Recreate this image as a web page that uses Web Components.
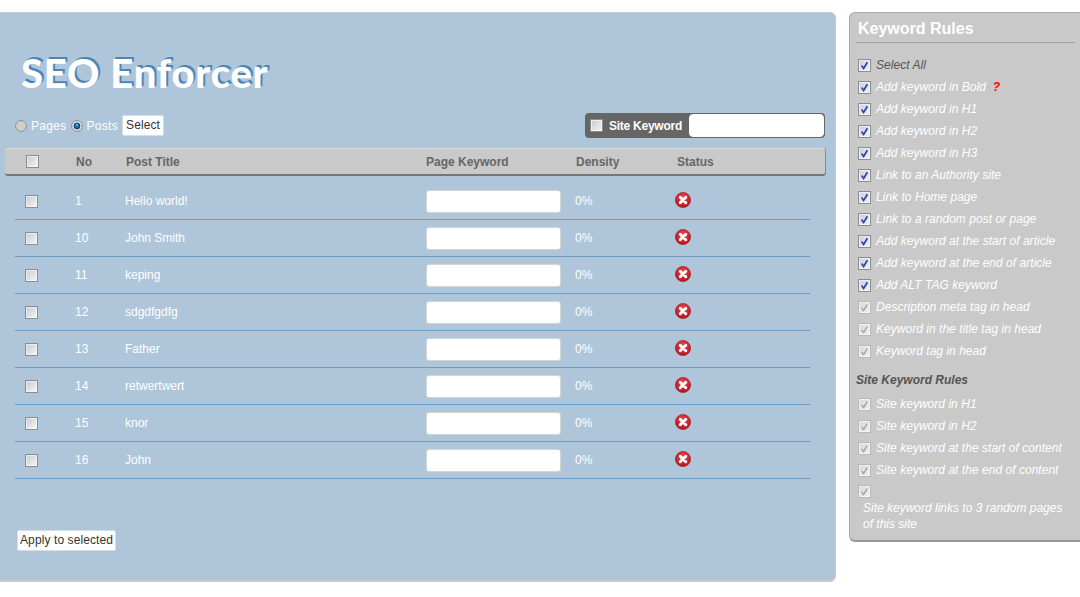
<!DOCTYPE html>
<html><head><meta charset="utf-8"><style>
html,body{margin:0;padding:0;background:#fff;overflow:hidden}
body{font:12px "Liberation Sans",Arial,sans-serif}
</style></head><body>
<seo-app></seo-app>
<script>
const def=(n,css,html)=>{customElements.define(n,class extends HTMLElement{connectedCallback(){if(this.shadowRoot)return;const r=this.attachShadow({mode:'open'});r.innerHTML=`<style>${css}</style>`+(typeof html==='function'?html(this):html);}})};
def('seo-check',`:host{display:inline-block;width:13px;height:13px;flex:none;line-height:0}svg{display:block}`,h=>{
 const v=h.getAttribute('state')||'';
 const id='g'+Math.random().toString(36).slice(2);
 let stroke='#8c8c8c',mark='',a='#c4c8cf',b='#f8f8f8';
 if(v==='on'){a='#c9cfe4';b='#f0f2f8';mark='<path d="M3.6 6.6 5.6 9.4 9.4 3.2" fill="none" stroke="#31439a" stroke-width="1.7"/>'}
 if(v==='dim'){stroke='#b8b8b8';a='#d8d8d8';b='#efefef';mark='<path d="M3.6 6.8 5.6 9.6 9.2 3.6" fill="none" stroke="#a0a0a0" stroke-width="1.3"/>'}
 return `<svg width="13" height="13" viewBox="0 0 13 13"><defs><linearGradient id="${id}" x1="0" y1="0" x2="1" y2="1"><stop offset="0" stop-color="${a}"/><stop offset="1" stop-color="${b}"/></linearGradient></defs><rect x=".5" y=".5" width="12" height="12" fill="url(#${id})" stroke="${stroke}"/><rect x="1.5" y="1.5" width="10" height="10" fill="none" stroke="#fff" stroke-opacity=".55"/>${mark}</svg>`;
});
def('seo-radio',`:host{display:inline-block;width:12px;height:12px;flex:none;line-height:0}svg{display:block}`,h=>{
 const on=h.hasAttribute('on');
 return `<svg width="12" height="12" viewBox="0 0 12 12"><circle cx="6" cy="6" r="5.4" fill="${on?'#dcdfe3':'#d6d6d6'}" stroke="#8f8f8f"/>${on?'<circle cx="6" cy="6" r="3" fill="#0b6fa8" stroke="#12304a" stroke-width=".8"/><circle cx="6" cy="5" r="1" fill="#7cc4ea"/>':'<circle cx="6" cy="6" r="4" fill="#cfcfcf"/>'}</svg>`;
});
def('seo-status',`:host{display:block;width:16px;height:16px;line-height:0}svg{display:block}`,
`<svg width="16" height="16" viewBox="0 0 16 16"><defs><radialGradient id="r" cx=".5" cy=".35" r=".7"><stop offset="0" stop-color="#ea4a55"/><stop offset="1" stop-color="#b20d14"/></radialGradient></defs><circle cx="8" cy="8" r="7.6" fill="url(#r)" stroke="#a51015" stroke-width=".6"/><path d="M5.2 5.2 10.8 10.8M10.8 5.2 5.2 10.8" stroke="#fff" stroke-width="2.9" stroke-linecap="round"/></svg>`);
def('seo-field',`:host{display:block;width:135px;height:23px;box-sizing:border-box;background:#fff;border:1px solid #d4d4d4;border-radius:3px}`,``);
def('seo-btn',`:host{display:block;width:max-content;background:#fff;border:1px solid #d8dde2;border-radius:2px;color:#333;font-size:12px;line-height:19px;padding:0 2px;letter-spacing:.1px}`,`<slot></slot>`);
def('seo-row',`:host{display:grid;grid-template-columns:50px 50px 301px 149px 100px 16px;align-items:center;height:36px;padding-left:10px;border-bottom:1px solid #6a9bc3;color:#fff;font-size:12px}
seo-status{margin-bottom:2px}`,
h=>`<seo-check></seo-check><span>${h.getAttribute('no')}</span><span>${h.getAttribute('name')}</span><seo-field></seo-field><span>0%</span><seo-status></seo-status>`);
def('seo-main',`:host{display:block;box-sizing:border-box;width:836px;height:570px;background:#aec5da;border:1px solid #c8c8c8;border-left:0;border-bottom:2px solid #c8c8c8;border-radius:0 6px 6px 0;color:#fff}
h1{margin:0;padding:34px 0 0 21px;height:67px;box-sizing:border-box;font:900 40px/52px Lato,sans-serif;letter-spacing:.75px;color:#fff;text-shadow:2px -2px 0 #4d86b5}
.bar{display:flex;align-items:center;justify-content:space-between;height:25px;margin:33px 10px 0 15px}
.mode{display:flex;align-items:center;gap:4px;color:#fff;font-size:12px;letter-spacing:.3px}
.mode seo-btn{padding:0 3px;letter-spacing:.1px}
.site{display:flex;align-items:center;height:25px;width:240px;box-sizing:border-box;background:#666;border-radius:4px;padding-left:5px;font:700 12px "Liberation Sans",sans-serif}
.site span{margin-left:6px;width:80px;flex:none;white-space:nowrap;letter-spacing:-.25px}
.site seo-field{width:135px;border-color:#fff;border-radius:4px;height:23px}
.head{display:grid;grid-template-columns:71px 50px 300px 150px 101px 1fr;align-items:center;box-sizing:border-box;height:28px;margin:10px 10px 0 5px;background:#c9c9c9;border-top:1px solid #dcdcdc;border-bottom:2px solid #777;border-radius:3px;color:#666;font:700 12px "Liberation Sans",sans-serif;box-shadow:1px 0 0 #888}
.head seo-check{margin-left:21px}
.rows{margin:7px 25px 0 15px}
.foot{margin:51px 0 0 17px}`,
`<h1>SEO Enforcer</h1>
<div class="bar"><div class="mode"><seo-radio></seo-radio><span>Pages</span><seo-radio on></seo-radio><span>Posts</span><seo-btn>Select</seo-btn></div>
<div class="site"><seo-check></seo-check><span>Site Keyword</span><seo-field></seo-field></div></div>
<div class="head"><seo-check></seo-check><span>No</span><span>Post Title</span><span>Page Keyword</span><span>Density</span><span>Status</span></div>
<div class="rows">${[[1,'Hello world!'],[10,'John Smith'],[11,'keping'],[12,'sdgdfgdfg'],[13,'Father'],[14,'retwertwert'],[15,'knor'],[16,'John']].map(r=>`<seo-row no="${r[0]}" name="${r[1]}"></seo-row>`).join('')}</div>
<div class="foot"><seo-btn>Apply to selected</seo-btn></div>`);
def('seo-rule',`:host{display:flex;align-items:center;gap:5px;height:22px;color:#fff;font:italic 12px "Liberation Sans",sans-serif;letter-spacing:.03px;white-space:nowrap}
:host([kind=dark]){color:#555}:host([kind=dim]){color:#fff}`,h=>`<seo-check state="${h.getAttribute('kind')==='dim'?'dim':'on'}"></seo-check><span><slot></slot></span>`);
def('seo-side',`:host{display:block;box-sizing:border-box;width:240px;height:530px;background:#c9c9c9;border:1px solid #aaa;border-right:0;border-bottom:2px solid #999;border-radius:6px 0 0 6px;padding:5px 0 0 6px}
h2{margin:0;height:25px;width:219px;border-bottom:1px solid #a3a3a3;padding-left:2px;box-sizing:border-box;color:#fff;font:700 16px/22px "Liberation Sans",sans-serif}
.list{margin-top:11px;padding-left:2px}
h3{margin:11px 0 5px;font:italic 700 12px/15px "Liberation Sans",sans-serif;color:#555}
.last{padding:0 6px 0 7px;color:#fff;font:italic 12px/16px "Liberation Sans",sans-serif;width:212px;margin-top:2px}
.lastc{padding-left:2px;height:17px;display:flex;align-items:flex-end}
b{color:#f00;font-weight:700}`,
`<h2>Keyword Rules</h2><div class="list">
<seo-rule kind="dark">Select All</seo-rule>
<seo-rule>Add keyword in Bold <b>&nbsp;?</b></seo-rule>
<seo-rule>Add keyword in H1</seo-rule><seo-rule>Add keyword in H2</seo-rule><seo-rule>Add keyword in H3</seo-rule>
<seo-rule>Link to an Authority site</seo-rule><seo-rule>Link to Home page</seo-rule><seo-rule>Link to a random post or page</seo-rule>
<seo-rule>Add keyword at the start of article</seo-rule><seo-rule>Add keyword at the end of article</seo-rule><seo-rule>Add ALT TAG keyword</seo-rule>
<seo-rule kind="dim">Description meta tag in head</seo-rule><seo-rule kind="dim">Keyword in the title tag in head</seo-rule><seo-rule kind="dim">Keyword tag in head</seo-rule></div>
<h3>Site Keyword Rules</h3><div class="list" style="margin-top:0">
<seo-rule kind="dim">Site keyword in H1</seo-rule><seo-rule kind="dim">Site keyword in H2</seo-rule><seo-rule kind="dim">Site keyword at the start of content</seo-rule><seo-rule kind="dim">Site keyword at the end of content</seo-rule></div>
<div class="lastc"><seo-check state="dim"></seo-check></div><div class="last">Site keyword links to 3 random pages of this site</div>`);
def('seo-app',`:host{display:flex;align-items:flex-start;gap:13px;padding-top:12px;width:1089px;box-sizing:border-box}`,`<seo-main></seo-main><seo-side></seo-side>`);
</script></body></html>
